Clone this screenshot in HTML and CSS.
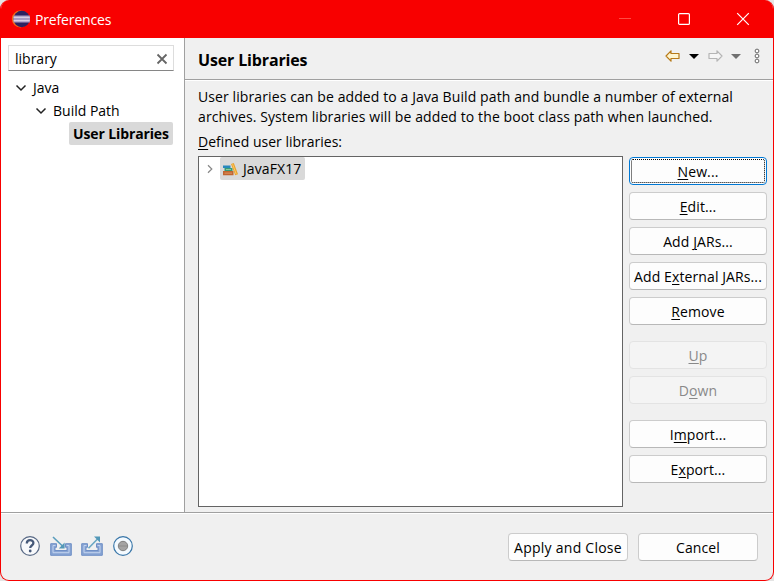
FILE: index.html
```html
<!DOCTYPE html>
<html lang="en">
<head>
<meta charset="utf-8">
<title>Preferences</title>
<link rel="stylesheet" href="styles.css">
</head>
<body>
<div class="window">
  <header class="titlebar">
    <svg class="logo" width="20" height="20" viewBox="0 0 20 20"><circle cx="9.2" cy="10" r="8.4" fill="#f06a1c"/><circle cx="10.7" cy="10" r="8.2" fill="#2c2260"/><path d="M2.6 7.6h16.2M2.4 10h16.6M2.6 12.4h16.2" stroke="#a99bc4" stroke-width="2.4"/><path d="M2.6 8.3h16.2M2.6 11.7h16.2" stroke="#e4dcec" stroke-width="1"/></svg>
    <span class="title">Preferences</span>
    <div class="controls">
      <svg width="14" height="14" viewBox="0 0 14 14"><path d="M1 6.5h12" stroke="#ff4b43"/></svg>
      <svg width="14" height="14" viewBox="0 0 14 14"><rect x="1.6" y="1.6" width="10.8" height="10.8" rx="1" fill="none" stroke="#fff" stroke-width="1.2"/></svg>
      <svg width="14" height="14" viewBox="0 0 14 14"><path d="M1.2 1.2l11.6 11.6M12.8 1.2L1.2 12.8" stroke="#fff" stroke-width="1.2"/></svg>
    </div>
  </header>
  <div class="content">
    <nav class="sidebar">
      <div class="search"><span>library</span><svg width="12" height="12" viewBox="0 0 12 12"><path d="M1.5 1.5l9 9M10.5 1.5l-9 9" stroke="#666" stroke-width="1.8"/></svg></div>
      <div class="tree">
        <div class="node"><svg width="12" height="8" viewBox="0 0 12 8"><path d="M1.5 1.5L6 6l4.5-4.5" fill="none" stroke="#222" stroke-width="1.5"/></svg><span>Java</span></div>
        <div class="node level2"><svg width="12" height="8" viewBox="0 0 12 8"><path d="M1.5 1.5L6 6l4.5-4.5" fill="none" stroke="#222" stroke-width="1.5"/></svg><span>Build Path</span></div>
        <div class="node selected"><b>User Libraries</b></div>
      </div>
    </nav>
    <main class="page">
      <div class="heading">
        <h1>User Libraries</h1>
        <div class="history">
          <svg width="96" height="16" viewBox="0 0 96 16"><path d="M1 8l5-5.2v2.7h8v5H6v2.7z" fill="#fff5cf" stroke="#b87a18" stroke-width="1.2" stroke-linejoin="round"/><path d="M24 6h10l-5 5z" fill="#000"/><path d="M57 8l-5-5.2v2.7h-8v5h8v2.7z" fill="#f6f6f6" stroke="#b5b5b5" stroke-width="1.2" stroke-linejoin="round"/><path d="M66 6h10l-5 5z" fill="#707070"/><g fill="#fff" stroke="#666"><circle cx="92" cy="3" r="1.9"/><circle cx="92" cy="8" r="1.9"/><circle cx="92" cy="13" r="1.9"/></g></svg>
        </div>
      </div>
      <div class="description">User libraries can be added to a Java Build path and bundle a number of external<br>archives. System libraries will be added to the boot class path when launched.</div>
      <div class="label"><u>D</u>efined user libraries:</div>
      <div class="editor">
        <div class="list">
          <svg width="8" height="10" viewBox="0 0 8 10"><path d="M2 1.3L5.8 5 2 8.7" fill="none" stroke="#888" stroke-width="1.2"/></svg>
          <div class="item"><svg width="16" height="14" viewBox="0 0 16 14"><path d="M0 3.6h7.5v2.4H0z" fill="#2688bd"/><path d="M1.5 6h8v3h-8z" fill="#359b78"/><path d="M3 7.5h5" stroke="#8cc79c"/><path d="M0 9h10.5v4.2H0z" fill="#c0652f"/><path d="M1.5 11.1h7.5" stroke="#dd9565"/><path d="M8 2l2.8-.9 4.2 11.2-2.8 1z" fill="#e9a22e"/><path d="M9.6 2.2l3.6 10" stroke="#fbc963"/></svg><span>JavaFX17</span></div>
        </div>
        <div class="actions">
          <button class="focused"><span><u>N</u>ew...</span></button>
          <button><span><u>E</u>dit...</span></button>
          <button><span>Add <u>J</u>ARs...</span></button>
          <button><span>Add E<u>x</u>ternal JARs...</span></button>
          <button class="group-end"><span><u>R</u>emove</span></button>
          <button disabled><span><u>U</u>p</span></button>
          <button disabled class="group-end"><span>D<u>o</u>wn</span></button>
          <button><span>I<u>m</u>port...</span></button>
          <button><span>E<u>x</u>port...</span></button>
        </div>
      </div>
    </main>
  </div>
  <footer class="footer">
    <div class="tools">
      <svg width="22" height="22" viewBox="0 0 22 22"><circle cx="11" cy="11" r="9.3" fill="#f8f9fb" stroke="#596a86" stroke-width="1.2"/><path d="M7.8 8.4c0-4.4 6.6-4.3 6.6-.4 0 2.5-3.2 2.5-3.2 5" fill="none" stroke="#465979" stroke-width="2.3"/><circle cx="11.2" cy="16" r="1.4" fill="#465979"/></svg>
      <svg width="22" height="22" viewBox="0 0 22 22"><path d="M.7 8.7h5.8v3.6H5v3.2h12v-3.2h-1.5V8.7h5.8v11.6H.7z" fill="#88a4d4" stroke="#6f8fc6"/><path d="M5.5 10.5H3v7.2h16v-7.2h-2.5" fill="none" stroke="#c2d3ee"/><path d="M3 2l10 9.5" stroke="#5a9dbd" stroke-width="1.6"/><path d="M14.6 7.5v6H8.8z" fill="#5298b8"/></svg>
      <svg width="22" height="22" viewBox="0 0 22 22"><path d="M.7 8.7h5.8v3.6H5v3.2h12v-3.2h-1.5V8.7h5.8v11.6H.7z" fill="#88a4d4" stroke="#6f8fc6"/><path d="M5.5 10.5H3v7.2h16v-7.2h-2.5" fill="none" stroke="#c2d3ee"/><path d="M7.5 13.3L17 3.5" stroke="#6aa7c3" stroke-width="1.6"/><path d="M13 1.4h6v6z" fill="#5298b8"/></svg>
      <svg width="22" height="22" viewBox="0 0 22 22"><circle cx="11" cy="11" r="9.3" fill="#f4faff" stroke="#3976a8" stroke-width="1.2"/><circle cx="11" cy="11" r="4.7" fill="#a4a4a4" stroke="#808080"/><path d="M7 11h8" stroke="#8c8c8c"/></svg>
    </div>
    <div class="submit"><button><span class="apply">Apply and Close</span></button><button><span>Cancel</span></button></div>
  </footer>
</div>
</body>
</html>
```
FILE: styles.css
```css
* { box-sizing: border-box; }
html { background: #e4e4e4; }
body { margin: 0; font: 14px/20px "Open Sans", "Noto Sans", sans-serif; color: #000; }
.window { width: 774px; height: 581px; display: flex; flex-direction: column; border: 1px solid #f80000; border-top: 0; border-radius: 9px; overflow: hidden; background: #f0f0f0; }
svg { display: block; flex: none; }
.titlebar { height: 38px; flex: none; display: flex; align-items: center; padding: 0 23px 0 10px; background: #f80000; color: #fff; }
.title { margin-left: 4px; padding-top: 2px; letter-spacing: -.15px; }
.controls { margin-left: auto; display: flex; gap: 45px; }
.content { height: 474px; flex: none; display: flex; }
.sidebar { width: 184px; flex: none; background: #fff; border-right: 1px solid #a0a0a0; padding: 7px 10px 0 7px; }
.search { height: 26px; display: flex; align-items: center; justify-content: space-between; padding: 1px 5px 0 6px; border: 1px solid #ddd; border-bottom-color: #868686; }
.tree { padding-top: 5px; }
.node { display: flex; align-items: center; height: 23px; padding-left: 7px; gap: 6px; }
.level2 { padding-left: 27px; }
.selected { width: 104px; margin-left: 61px; padding-left: 4px; background: #d9d9d9; border-radius: 2px; white-space: nowrap; }
.selected b { letter-spacing: -.12px; }
.page { flex: 1; min-width: 0; }
.heading { height: 42px; display: flex; justify-content: space-between; border-bottom: 1px solid #a0a0a0; box-shadow: 0 1px #fff; padding: 12px 12px 0 13px; }
h1 { margin: 0; font-size: 16px; line-height: 21px; letter-spacing: -.15px; }
.history { margin-top: -2px; }
.description { padding: 7px 0 0 13px; white-space: nowrap; letter-spacing: .1px; }
.label { padding: 5px 0 0 13px; }
.editor { display: flex; align-items: flex-start; gap: 6px; padding: 4px 6px 0 13px; }
.list { width: 425px; height: 351px; display: flex; gap: 6px; background: #fff; border: 1px solid #646464; padding-left: 7px; }
.list > svg { margin-top: 7px; }
.item { height: 23px; width: 85px; padding-left: 3px; display: flex; align-items: center; gap: 4px; background: #d9d9d9; border-radius: 2px; letter-spacing: .1px; }
.actions { width: 138px; display: flex; flex-direction: column; gap: 7px; padding-top: 1px; }
button { height: 28px; flex: none; padding: 2px 0 0; font: inherit; letter-spacing: .1px; color: inherit; border: 1px solid #ccc; border-bottom-color: #b8b8b8; border-radius: 4px; background: #fdfdfd; white-space: nowrap; display: flex; align-items: center; justify-content: center; }
button:disabled { background: #f4f4f4; border-color: #e3e3e3; color: #898989; }
.focused { border-color: #0078d4; outline: 1px dotted #000; outline-offset: -3px; }
.group-end { margin-bottom: 9px; }
u { text-decoration-thickness: 1px; text-underline-offset: 2px; }
.apply { letter-spacing: .25px; }
.footer { flex: 1; border-top: 1px solid #a0a0a0; box-shadow: inset 0 1px #fff; display: flex; justify-content: space-between; padding: 20px 15px 0 18px; }
.tools { display: flex; gap: 9px; padding-top: 2px; }
.submit { display: flex; gap: 10px; }
.submit button { width: 120px; }
```
